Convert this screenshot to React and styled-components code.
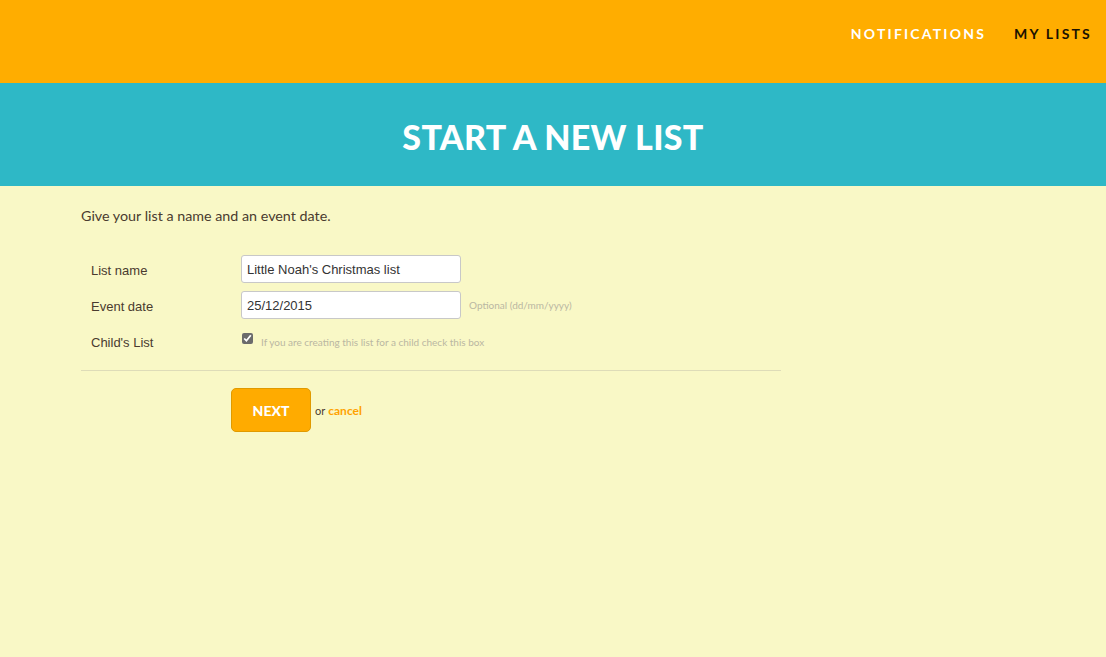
import styled, { createGlobalStyle } from 'styled-components';

const GlobalStyle = createGlobalStyle`
	html, body {
		margin: 0;
		padding: 0;
		background: #f9f8c6;
	}
	body {
		font-family: 'Lato', 'Liberation Sans', sans-serif;
	}
`;

const Page = styled.div`
	min-height: 657px;
	background: #f9f8c6;
`;

const TopBar = styled.header`
	height: 83px;
	background: #ffad00;
	display: flex;
	justify-content: flex-end;
	align-items: flex-start;
	padding: 25px 14px 0 0;
	box-sizing: border-box;
	gap: 28px;
`;

const NavLink = styled.a`
	font-family: 'Lato', sans-serif;
	font-weight: 700;
	font-size: 14px;
	letter-spacing: 2.2px;
	color: ${props => (props.$dark ? '#1a1200' : '#ffffff')};
	text-decoration: none;
`;

const Banner = styled.div`
	height: 103px;
	background: #2eb8c6;
	display: flex;
	align-items: center;
	justify-content: center;
	padding-top: 4px;
	box-sizing: border-box;
`;

const Title = styled.h1`
	margin: 0;
	color: #ffffff;
	font-family: 'Lato', sans-serif;
	font-weight: 900;
	font-size: 34px;
	letter-spacing: 0.3px;
`;

const Content = styled.main`
	padding: 21px 0 0 81px;
	width: 700px;
`;

const Intro = styled.p`
	margin: 0 0 27px;
	font-size: 14.3px;
	color: #4a3b2f;
`;

const Form = styled.form`
	display: flex;
	flex-direction: column;
`;

const Row = styled.div`
	display: grid;
	grid-template-columns: 150px auto;
	align-items: center;
	padding-left: 10px;
	height: ${props => props.$h || 36}px;
`;

const Label = styled.label`
	font-family: 'Liberation Sans', Arial, sans-serif;
	font-size: 13px;
	color: #4a3b2f;
	padding-top: ${props => props.$pt || 0}px;
`;

const Field = styled.div`
	display: flex;
	align-items: center;
	gap: 8px;
`;

const Input = styled.input`
	width: 220px;
	height: 28px;
	box-sizing: border-box;
	border: 1px solid #c8c8c8;
	border-radius: 3px;
	background: #fff;
	padding: 0 5px;
	font-family: 'Liberation Sans', Arial, sans-serif;
	font-size: 13px;
	color: #333;
	outline: none;
`;

const Hint = styled.span`
	font-size: 10px;
	color: #b9b7a2;
	padding-top: ${props => props.$pt || 0}px;
`;

const Check = styled.input`
	margin: -3px 0 0 1px;
	width: 11px;
	height: 11px;
	accent-color: #6b6b6b;
`;

const Divider = styled.hr`
	border: 0;
	border-top: 1px solid #dedcb8;
	margin: 13px 0 17px;
	width: 700px;
`;

const Actions = styled.div`
	display: flex;
	align-items: center;
	gap: 3px;
	padding-left: 150px;
`;

const NextButton = styled.button`
	width: 80px;
	height: 44px;
	margin-right: 1px;
	background: #ffab00;
	border: 1px solid #e09a00;
	border-radius: 5px;
	color: #fff;
	font-family: 'Lato', sans-serif;
	font-weight: 900;
	font-size: 14px;
	cursor: pointer;
`;

const Or = styled.span`
	font-size: 11px;
	color: #4a3b2f;
`;

const Cancel = styled.a`
	font-size: 12px;
	font-weight: 700;
	color: #ffa200;
	text-decoration: none;
`;

export default function App() {
	return (
		<Page>
			<GlobalStyle />
			<TopBar>
				<NavLink href="#">NOTIFICATIONS</NavLink>
				<NavLink href="#" $dark>MY LISTS</NavLink>
			</TopBar>
			<Banner>
				<Title>START A NEW LIST</Title>
			</Banner>
			<Content>
				<Intro>Give your list a name and an event date.</Intro>
				<Form onSubmit={e => e.preventDefault()}>
					<Row>
						<Label $pt={2}>List name</Label>
						<Field>
							<Input defaultValue="Little Noah's Christmas list" />
						</Field>
					</Row>
					<Row>
						<Label $pt={2}>Event date</Label>
						<Field>
							<Input defaultValue="25/12/2015" />
							<Hint>Optional (dd/mm/yyyy)</Hint>
						</Field>
					</Row>
					<Row $h={34}>
						<Label $pt={4}>Child's List</Label>
						<Field>
							<Check type="checkbox" defaultChecked />
							<Hint $pt={4}>If you are creating this list for a child check this box</Hint>
						</Field>
					</Row>
					<Divider />
					<Actions>
						<NextButton type="submit">NEXT</NextButton>
						<Or>or</Or>
						<Cancel href="#">cancel</Cancel>
					</Actions>
				</Form>
			</Content>
		</Page>
	);
}
